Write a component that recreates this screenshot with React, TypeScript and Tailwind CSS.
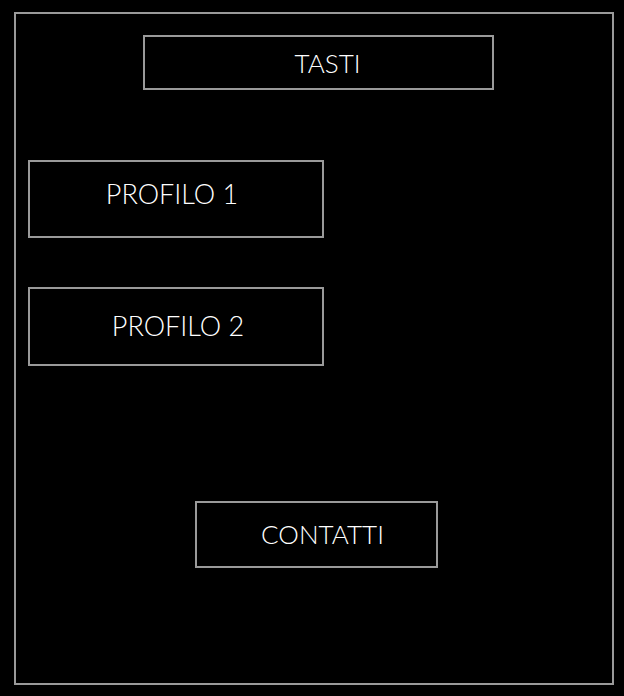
export default function App() {
  const box = "flex items-center justify-center border-2 border-[#9a9a9a] text-white";
  return (
    <div className="h-[696px] w-[624px] bg-black pl-[14px] pt-[12px] font-['Lato','Open_Sans',sans-serif] font-light">
      <div className="flex h-[673px] w-[600px] flex-col items-start border-2 border-[#9a9a9a]">
        <div className={`${box} ml-[127px] mt-[21px] h-[55px] w-[351px] pl-[18px] pt-[2px] text-[26px]`}>TASTI</div>
        <div className={`${box} ml-[12px] mt-[70px] h-[78px] w-[296px] pb-[10px] pr-[8px] text-[27px]`}>PROFILO 1</div>
        <div className={`${box} ml-[12px] mt-[49px] h-[79px] w-[296px] pl-[4px] text-[27px]`}>PROFILO 2</div>
        <div className={`${box} ml-[179px] mt-[135px] h-[67px] w-[243px] pl-[12px] text-[26px]`}>CONTATTI</div>
      </div>
    </div>
  );
}
